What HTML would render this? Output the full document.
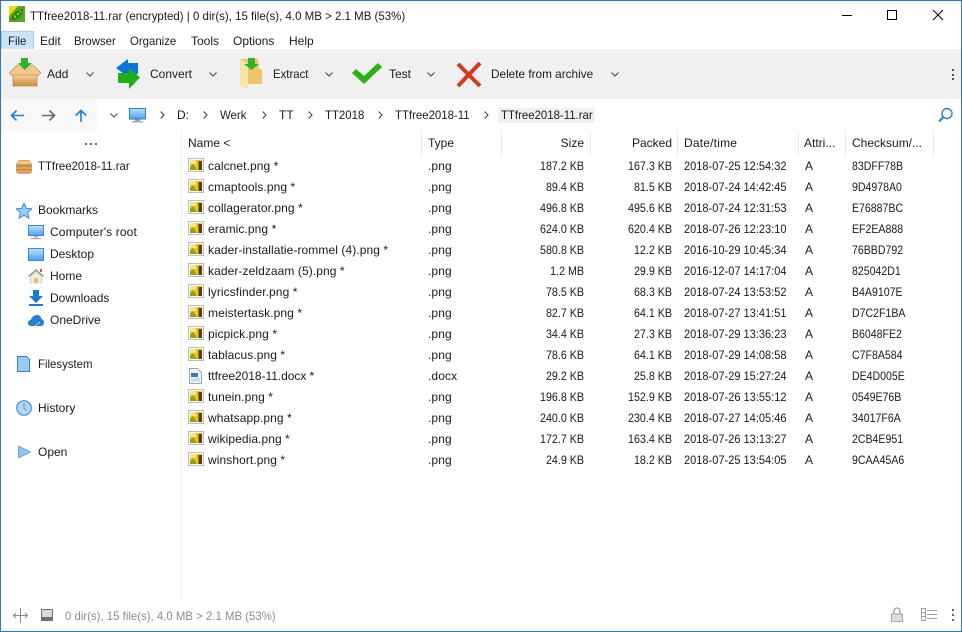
<!DOCTYPE html>
<html><head><meta charset="utf-8"><title>TTfree2018-11.rar</title>
<style>
html,body{margin:0;padding:0;background:#fff}
#w{position:relative;width:962px;height:632px;overflow:hidden;background:#fff;font:12px "Liberation Sans",sans-serif;color:#1a1a1a}
#w div,#w svg{position:absolute}
.t{white-space:pre;line-height:16px;height:16px}
.q{transform:scaleX(.95);transform-origin:left center}
.bar{left:0;width:962px}
.m{top:33px}
.tb{top:66px}
.p{top:107px}
.h{top:135px}
.s{top:131px;width:1px;height:25px;background:#eaeaea}
.row{left:0;width:962px;height:21px}
.row .t{top:3px}
.n{left:208px;letter-spacing:.08px}.y{left:428px;letter-spacing:.1px}
.z{left:504px;width:80px;text-align:right;transform:scaleX(.89);transform-origin:right center}
.k{left:592px;width:80px;text-align:right;transform:scaleX(.89);transform-origin:right center}
.d{left:684px;transform:scaleX(.92);transform-origin:left center}
.a{left:805px}
.x{left:852px;transform:scaleX(.88);transform-origin:left center}
.row svg{left:188px;top:3px}
</style></head><body>
<div id="w">
<svg width="0" height="0" style="left:0;top:0">
<defs>
<symbol id="png" viewBox="0 0 16 14">
<rect x=".5" y=".5" width="15" height="13" fill="#fafafa" stroke="#bdbdbd"/>
<rect x="2" y="2" width="12" height="10" fill="#eec425"/>
<rect x="2" y="2" width="6" height="4" fill="#f6e490"/>
<path d="M2 12V9l3-3 2 3 2 3z" fill="#94a018"/>
<rect x="10.500" y="3" width="3.500" height="9" fill="#55400f"/>
</symbol>
<symbol id="chev" viewBox="0 0 8 5"><path d="M.5.500L4 4 7.500.500" fill="none" stroke="#555" stroke-width="1.200"/></symbol>
<symbol id="sep" viewBox="0 0 5 8"><path d="M.7.500L4 4 .7 7.500" fill="none" stroke="#444" stroke-width="1.100"/></symbol>
<linearGradient id="mon" x1="0" y1="0" x2="0" y2="1"><stop offset="0" stop-color="#bfe2fb"/><stop offset="1" stop-color="#4c9fee"/></linearGradient>
<linearGradient id="box" x1="0" y1="0" x2="0" y2="1"><stop offset="0" stop-color="#f4d09a"/><stop offset="1" stop-color="#c98a40"/></linearGradient>
</defs>
</svg>

<!-- title bar -->
<svg style="left:9px;top:6px" width="16" height="16" viewBox="0 0 16 16"><rect width="16" height="16" fill="#5aa51c"/><path d="M0 0h9L0 10z" fill="#f2d81c"/><path d="M2 13C5 6 9 4 14 3c0 5-3 9-9 11z" fill="#2f7d10"/><circle cx="6" cy="10.500" r="1.300" fill="#8cd030"/><circle cx="9" cy="8" r="1.300" fill="#8cd030"/><circle cx="11.500" cy="5.500" r="1.100" fill="#8cd030"/></svg>
<div class="t" style="left:30px;top:8px;transform:scaleX(.957);transform-origin:left center">TTfree2018-11.rar (encrypted) | 0 dir(s), 15 file(s), 4.0 MB &gt; 2.1 MB (53%)</div>
<svg style="left:840px;top:8px" width="104" height="16" viewBox="0 0 104 16"><path d="M2 7.500h10" stroke="#000"/><rect x="47.500" y="2.500" width="9" height="9" fill="none" stroke="#000"/><path d="M93 2l10 10M103 2L93 12" stroke="#000"/></svg>

<!-- menu -->
<div style="left:1px;top:31px;width:31px;height:17px;background:#cce4f7;border:1px solid #a6cdec"></div>
<div class="t m q" style="left:8px">File</div>
<div class="t m" style="left:40px">Edit</div>
<div class="t m q" style="left:74px">Browser</div>
<div class="t m q" style="left:130px">Organize</div>
<div class="t m" style="left:191px">Tools</div>
<div class="t m" style="left:233px">Options</div>
<div class="t m" style="left:289px">Help</div>

<!-- toolbar -->
<div class="bar" style="top:49px;height:50px;background:#f0f0f0"></div>
<div class="bar" style="top:49px;height:4px;background:#f3f3f3"></div>
<svg style="left:9px;top:58px" width="33" height="29" viewBox="0 0 33 29">
<path d="M0 15L8 7h16l8 8-4 3H4z" fill="#f0c88c" stroke="#b58545" stroke-width=".6"/>
<path d="M4 17h24v11H4z" fill="url(#box)" stroke="#a87838" stroke-width=".6"/>
<path d="M12 0h7v5h4l-7.500 7L9 5h3z" fill="#2fb32c"/>
</svg>
<div class="t tb" style="left:47px">Add</div>
<svg style="left:86px;top:72px" width="8" height="5"><use href="#chev"/></svg>
<svg style="left:116px;top:59px" width="24" height="30" viewBox="0 0 24 30">
<path d="M0 9L12 0v4h10v11H12v3z" fill="#0b74d4"/>
<path d="M24 18.500L13 30v-6H2V14h11V9z" fill="#1fae1c"/>
</svg>
<div class="t tb" style="left:150px">Convert</div>
<svg style="left:209px;top:72px" width="8" height="5"><use href="#chev"/></svg>
<svg style="left:239px;top:57px" width="24" height="34" viewBox="0 0 24 34">
<path d="M1 2h18l1 10h3v15H9V7z" fill="#eec46c"/>
<path d="M1 2l8 5v26l-8-5z" fill="#f9e4a8"/>
<path d="M9 1h7v6h4l-7.500 6L5 7h4z" fill="#2fb32c"/>
</svg>
<div class="t tb q" style="left:273px">Extract</div>
<svg style="left:325px;top:72px" width="8" height="5"><use href="#chev"/></svg>
<svg style="left:352px;top:63px" width="30" height="21" viewBox="0 0 30 21"><path d="M0 10l4-4 8 7L26 0l4 4-18 17z" fill="#2fb014"/></svg>
<div class="t tb" style="left:389px">Test</div>
<svg style="left:427px;top:72px" width="8" height="5"><use href="#chev"/></svg>
<svg style="left:456px;top:61px" width="26" height="27" viewBox="0 0 26 27"><path d="M2 3l22 22M24 2L2 25" stroke="#d33a20" stroke-width="4" fill="none"/></svg>
<div class="t tb" style="left:491px;transform:scaleX(.982);transform-origin:left center">Delete from archive</div>
<svg style="left:611px;top:72px" width="8" height="5"><use href="#chev"/></svg>
<div style="left:952px;top:69px;width:2px;height:2px;background:#555"></div>
<div style="left:952px;top:74px;width:2px;height:2px;background:#555"></div>
<div style="left:952px;top:78px;width:2px;height:2px;background:#555"></div>

<!-- path bar -->
<div style="left:0;top:99px;width:97px;height:32px;background:#f8f8f8"></div>
<svg style="left:10px;top:110px" width="14" height="11" viewBox="0 0 14 11"><path d="M14 5.500H1.500M6.500.500l-5 5 5 5" fill="none" stroke="#1e7ed6" stroke-width="1.600"/></svg>
<svg style="left:42px;top:110px" width="14" height="11" viewBox="0 0 14 11"><path d="M0 5.500h12.500M7.500.500l5 5-5 5" fill="none" stroke="#6a6a6a" stroke-width="1.600"/></svg>
<svg style="left:75px;top:109px" width="12" height="13" viewBox="0 0 12 13"><path d="M6 13V1.500M.7 6.500L6 1.500l5.300 5" fill="none" stroke="#1e7ed6" stroke-width="1.600"/></svg>
<svg style="left:110px;top:113px" width="8" height="5"><use href="#chev"/></svg>
<svg style="left:129px;top:108px" width="17" height="15" viewBox="0 0 17 15"><rect x=".5" y=".5" width="16" height="10.500" fill="url(#mon)" stroke="#2f7fc8"/><rect x="6" y="11.500" width="5" height="1.500" fill="#999"/><rect x="3" y="13" width="11" height="1.500" fill="#aaa"/></svg>
<svg style="left:160px;top:111px" width="5" height="8"><use href="#sep"/></svg>
<div class="t p" style="left:177px">D:</div>
<svg style="left:203px;top:111px" width="5" height="8"><use href="#sep"/></svg>
<div class="t p q" style="left:220px">Werk</div>
<svg style="left:262px;top:111px" width="5" height="8"><use href="#sep"/></svg>
<div class="t p" style="left:279px">TT</div>
<svg style="left:308px;top:111px" width="5" height="8"><use href="#sep"/></svg>
<div class="t p q" style="left:325px">TT2018</div>
<svg style="left:378px;top:111px" width="5" height="8"><use href="#sep"/></svg>
<div class="t p q" style="left:395px">TTfree2018-11</div>
<svg style="left:484px;top:111px" width="5" height="8"><use href="#sep"/></svg>
<div style="left:498px;top:108px;width:97px;height:15px;background:#f0f0f0"></div>
<div class="t p q" style="left:501px">TTfree2018-11.rar</div>
<svg style="left:937px;top:107px" width="17" height="16" viewBox="0 0 17 16"><circle cx="10" cy="6.500" r="5" fill="none" stroke="#2a80c8" stroke-width="1.400"/><path d="M6.300 10L2 14.500" stroke="#2a80c8" stroke-width="2"/></svg>

<!-- sidebar -->
<div style="left:181px;top:131px;width:1px;height:470px;background:#f0f0f0"></div>
<div style="left:85px;top:143px;width:2px;height:2px;background:#666"></div>
<div style="left:90px;top:143px;width:2px;height:2px;background:#666"></div>
<div style="left:95px;top:143px;width:2px;height:2px;background:#666"></div>

<svg style="left:16px;top:160px" width="16" height="14" viewBox="0 0 16 14"><path d="M3 0h10l3 4v8l-2 2H2l-2-2V4z" fill="#dca35e"/><path d="M0 5h16v1.500H0zM0 9h16v1H0z" fill="#b98a48"/><path d="M3 1h10l1 3H2z" fill="#f0c88c"/></svg>
<div class="t q" style="left:38px;top:158px">TTfree2018-11.rar</div>

<svg style="left:16px;top:203px" width="16" height="16" viewBox="0 0 16 16"><path d="M8 0l2.300 5.300 5.700.5-4.300 3.800 1.300 5.600L8 12.300 3 15.200l1.300-5.600L0 5.800l5.700-.5z" fill="#9ccdf6" stroke="#2f80d0" stroke-width=".9"/></svg>
<div class="t" style="left:38px;top:202px">Bookmarks</div>

<svg style="left:28px;top:225px" width="16" height="15" viewBox="0 0 16 15"><rect x=".5" y=".5" width="15" height="10" fill="url(#mon)" stroke="#3f8ad0"/><rect x="6" y="11" width="4" height="1.500" fill="#aaa"/><rect x="3" y="13" width="10" height="1.200" fill="#aaa"/></svg>
<div class="t" style="left:50px;top:224px;letter-spacing:.13px">Computer's root</div>
<svg style="left:28px;top:248px" width="16" height="13" viewBox="0 0 16 13"><rect x=".5" y=".5" width="15" height="12" fill="url(#mon)" stroke="#3f8ad0"/></svg>
<div class="t" style="left:50px;top:246px">Desktop</div>
<svg style="left:28px;top:268px" width="16" height="16" viewBox="0 0 16 16"><path d="M0 8l8-7 8 7-1 1-7-6-7 6z" fill="#9a9a9a"/><path d="M2.500 8L8 3.500 13.500 8v7h-11z" fill="#f8ecd6" stroke="#b8b8b8" stroke-width=".6"/><rect x="6" y="10" width="4" height="5" fill="#e6bc78"/><rect x="12" y="1" width="2" height="3" fill="#c86040"/></svg>
<div class="t" style="left:50px;top:268px">Home</div>
<svg style="left:29px;top:290px" width="14" height="16" viewBox="0 0 14 16"><path d="M4 0h6v6h4l-7 7-7-7h4z" fill="#1a78d8"/><rect y="14" width="14" height="2" fill="#1a78d8"/></svg>
<div class="t" style="left:50px;top:290px">Downloads</div>
<svg style="left:28px;top:315px" width="16" height="11" viewBox="0 0 16 11"><path d="M3 11C1 11 0 9.500 0 8c0-2 1.500-3 3-3 .5-3 3-5 6-5 2.500 0 4 1.500 4.500 4 1.500.3 2.500 1.700 2.500 3.500S15 11 13 11z" fill="#2a80cc"/><path d="M7 11l5-4" stroke="#fff" stroke-width=".6"/></svg>
<div class="t" style="left:50px;top:312px">OneDrive</div>

<svg style="left:17px;top:356px" width="13" height="16" viewBox="0 0 13 16"><path d="M.5.500h9l3 3v12H.5z" fill="#9cc9f6" stroke="#2f80d0"/></svg>
<div class="t q" style="left:38px;top:356px">Filesystem</div>
<svg style="left:16px;top:400px" width="16" height="16" viewBox="0 0 16 16"><circle cx="8" cy="8" r="7.300" fill="#b4d6f8" stroke="#2f80d0"/><path d="M8 3v5l3 3" fill="none" stroke="#5a9ce0"/></svg>
<div class="t" style="left:38px;top:400px">History</div>
<svg style="left:18px;top:445px" width="13" height="14" viewBox="0 0 13 14"><path d="M.5 1L12.500 7 .5 13z" fill="#8cc4f4" stroke="#5a9ce0" stroke-width=".8"/></svg>
<div class="t" style="left:38px;top:444px">Open</div>

<!-- header -->
<div class="t h" style="left:188px">Name &lt;</div>
<div class="t h" style="left:428px">Type</div>
<div class="t h" style="left:504px;width:80px;text-align:right">Size</div>
<div class="t h" style="left:592px;width:80px;text-align:right">Packed</div>
<div class="t h" style="left:684px;letter-spacing:.2px">Date/time</div>
<div class="t h" style="left:804px">Attri...</div>
<div class="t h" style="left:852px">Checksum/...</div>
<div class="s" style="left:421px"></div><div class="s" style="left:501px"></div><div class="s" style="left:590px"></div><div class="s" style="left:677px"></div><div class="s" style="left:798px"></div><div class="s" style="left:845px"></div><div class="s" style="left:933px"></div>

<!-- rows -->
<div class="row" style="top:155px"><svg width="16" height="14"><use href="#png"/></svg><div class="t n">calcnet.png *</div><div class="t y">.png</div><div class="t z">187.2 KB</div><div class="t k">167.3 KB</div><div class="t d">2018-07-25 12:54:32</div><div class="t a">A</div><div class="t x">83DFF78B</div></div>
<div class="row" style="top:176px"><svg width="16" height="14"><use href="#png"/></svg><div class="t n">cmaptools.png *</div><div class="t y">.png</div><div class="t z">89.4 KB</div><div class="t k">81.5 KB</div><div class="t d">2018-07-24 14:42:45</div><div class="t a">A</div><div class="t x">9D4978A0</div></div>
<div class="row" style="top:197px"><svg width="16" height="14"><use href="#png"/></svg><div class="t n">collagerator.png *</div><div class="t y">.png</div><div class="t z">496.8 KB</div><div class="t k">495.6 KB</div><div class="t d">2018-07-24 12:31:53</div><div class="t a">A</div><div class="t x">E76887BC</div></div>
<div class="row" style="top:218px"><svg width="16" height="14"><use href="#png"/></svg><div class="t n">eramic.png *</div><div class="t y">.png</div><div class="t z">624.0 KB</div><div class="t k">620.4 KB</div><div class="t d">2018-07-26 12:23:10</div><div class="t a">A</div><div class="t x">EF2EA888</div></div>
<div class="row" style="top:239px"><svg width="16" height="14"><use href="#png"/></svg><div class="t n">kader-installatie-rommel (4).png *</div><div class="t y">.png</div><div class="t z">580.8 KB</div><div class="t k">12.2 KB</div><div class="t d">2016-10-29 10:45:34</div><div class="t a">A</div><div class="t x">76BBD792</div></div>
<div class="row" style="top:260px"><svg width="16" height="14"><use href="#png"/></svg><div class="t n">kader-zeldzaam (5).png *</div><div class="t y">.png</div><div class="t z">1.2 MB</div><div class="t k">29.9 KB</div><div class="t d">2016-12-07 14:17:04</div><div class="t a">A</div><div class="t x">825042D1</div></div>
<div class="row" style="top:281px"><svg width="16" height="14"><use href="#png"/></svg><div class="t n">lyricsfinder.png *</div><div class="t y">.png</div><div class="t z">78.5 KB</div><div class="t k">68.3 KB</div><div class="t d">2018-07-24 13:53:52</div><div class="t a">A</div><div class="t x">B4A9107E</div></div>
<div class="row" style="top:302px"><svg width="16" height="14"><use href="#png"/></svg><div class="t n">meistertask.png *</div><div class="t y">.png</div><div class="t z">82.7 KB</div><div class="t k">64.1 KB</div><div class="t d">2018-07-27 13:41:51</div><div class="t a">A</div><div class="t x">D7C2F1BA</div></div>
<div class="row" style="top:323px"><svg width="16" height="14"><use href="#png"/></svg><div class="t n">picpick.png *</div><div class="t y">.png</div><div class="t z">34.4 KB</div><div class="t k">27.3 KB</div><div class="t d">2018-07-29 13:36:23</div><div class="t a">A</div><div class="t x">B6048FE2</div></div>
<div class="row" style="top:344px"><svg width="16" height="14"><use href="#png"/></svg><div class="t n">tablacus.png *</div><div class="t y">.png</div><div class="t z">78.6 KB</div><div class="t k">64.1 KB</div><div class="t d">2018-07-29 14:08:58</div><div class="t a">A</div><div class="t x">C7F8A584</div></div>
<div class="row" style="top:365px"><svg style="left:189px;top:3px" width="13" height="16" viewBox="0 0 13 16"><path d="M.5.500h8l4 4v11H.5z" fill="#f4f6f8" stroke="#9aa4b0"/><rect x="2" y="5" width="7" height="4" fill="#2f78c8"/><path d="M2 11h9M2 13h9" stroke="#b8c4d0"/></svg><div class="t n" style="letter-spacing:-.05px">ttfree2018-11.docx *</div><div class="t y">.docx</div><div class="t z">29.2 KB</div><div class="t k">25.8 KB</div><div class="t d">2018-07-29 15:27:24</div><div class="t a">A</div><div class="t x">DE4D005E</div></div>
<div class="row" style="top:386px"><svg width="16" height="14"><use href="#png"/></svg><div class="t n">tunein.png *</div><div class="t y">.png</div><div class="t z">196.8 KB</div><div class="t k">152.9 KB</div><div class="t d">2018-07-26 13:55:12</div><div class="t a">A</div><div class="t x">0549E76B</div></div>
<div class="row" style="top:407px"><svg width="16" height="14"><use href="#png"/></svg><div class="t n">whatsapp.png *</div><div class="t y">.png</div><div class="t z">240.0 KB</div><div class="t k">230.4 KB</div><div class="t d">2018-07-27 14:05:46</div><div class="t a">A</div><div class="t x">34017F6A</div></div>
<div class="row" style="top:428px"><svg width="16" height="14"><use href="#png"/></svg><div class="t n">wikipedia.png *</div><div class="t y">.png</div><div class="t z">172.7 KB</div><div class="t k">163.4 KB</div><div class="t d">2018-07-26 13:13:27</div><div class="t a">A</div><div class="t x">2CB4E951</div></div>
<div class="row" style="top:449px"><svg width="16" height="14"><use href="#png"/></svg><div class="t n">winshort.png *</div><div class="t y">.png</div><div class="t z">24.9 KB</div><div class="t k">18.2 KB</div><div class="t d">2018-07-25 13:54:05</div><div class="t a">A</div><div class="t x">9CAA45A6</div></div>

<!-- status bar -->
<svg style="left:13px;top:608px" width="15" height="15" viewBox="0 0 15 15"><path d="M7.500 0v15M0 7.500h15M3 5L.5 7.500 3 10M12 5l2.500 2.500L12 10" fill="none" stroke="#8a8a8a"/></svg>
<svg style="left:41px;top:609px" width="12" height="12" viewBox="0 0 12 12"><rect x=".5" y=".5" width="11" height="11" fill="#d8d8d8" stroke="#707070"/><rect y="8" width="12" height="4" fill="#707070"/></svg>
<div class="t q" style="left:65px;top:608px;color:#8c8c8c">0 dir(s), 15 file(s), 4.0 MB &gt; 2.1 MB (53%)</div>
<svg style="left:891px;top:607px" width="12" height="15" viewBox="0 0 12 15"><path d="M3 7V4a3 3 0 0 1 6 0v3" fill="none" stroke="#a0a0a0" stroke-width="1.300"/><rect x=".5" y="7" width="11" height="7.500" fill="#dcdcdc" stroke="#a8a8a8"/></svg>
<svg style="left:921px;top:608px" width="16" height="13" viewBox="0 0 16 13"><path d="M.5.500h4v12h-4zM.5 4.500h4M.5 8.500h4M6 2.500h10M6 6.500h10M6 10.500h10" fill="none" stroke="#a0a0a0"/></svg>
<div style="left:952px;top:609px;width:2px;height:2px;background:#666"></div>
<div style="left:952px;top:614px;width:2px;height:2px;background:#666"></div>
<div style="left:952px;top:619px;width:2px;height:2px;background:#666"></div>

<!-- window border -->
<div style="left:0;top:0;width:962px;height:1px;background:#2b79b5"></div>
<div style="left:0;top:0;width:1px;height:632px;background:#2b79b5"></div>
<div style="left:961px;top:0;width:1px;height:632px;background:#2b79b5"></div>
<div style="left:0;top:631px;width:962px;height:1px;background:#2b79b5"></div>
</div>
</body></html>
